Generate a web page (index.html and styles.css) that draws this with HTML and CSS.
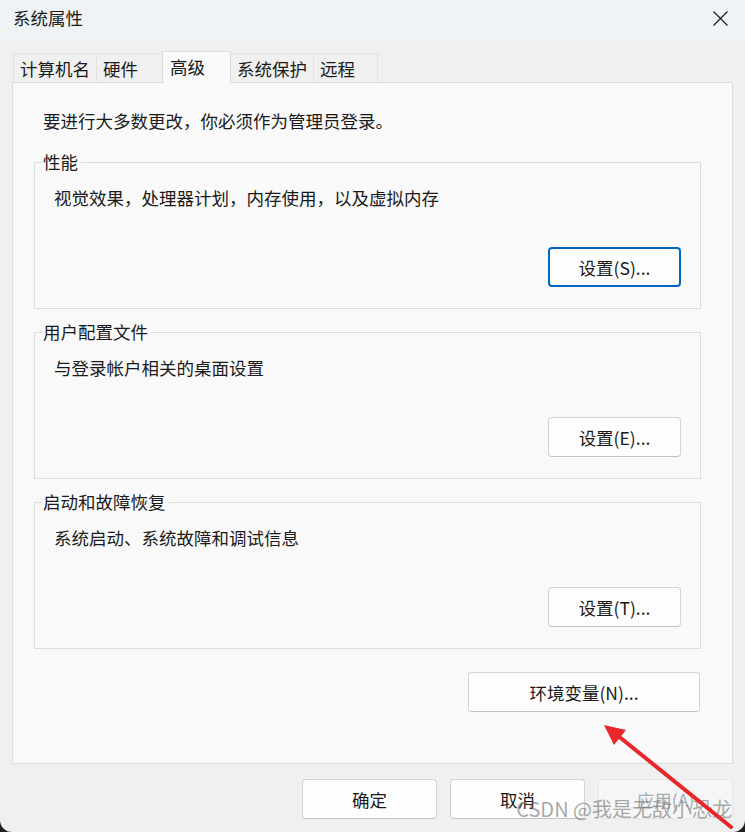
FILE: index.html
```html
<!DOCTYPE html>
<html lang="zh-CN">
<head>
    <meta charset="UTF-8">
    <meta name="viewport" content="width=device-width, initial-scale=1.0">
    <title>系统属性</title>
    <link rel="stylesheet" href="styles.css">
</head>
<body>
    <div class="window">
        <div class="titlebar">
            <span class="title">系统属性</span>
            <svg class="close" width="15" height="15" viewBox="0 0 15 15">
                <path d="M0.5 0.5 L14.5 14.5 M14.5 0.5 L0.5 14.5" stroke="#1a1a1a" stroke-width="1.2" fill="none"/>
            </svg>
        </div>

        <div class="content">
            <div class="tabs">
                <div class="tab">计算机名</div>
                <div class="tab">硬件</div>
                <div class="tab active">高级</div>
                <div class="tab">系统保护</div>
                <div class="tab short">远程</div>
            </div>

            <div class="panel">
                <p class="note">要进行大多数更改，你必须作为管理员登录。</p>

                <fieldset class="group">
                    <legend>性能</legend>
                    <p class="desc">视觉效果，处理器计划，内存使用，以及虚拟内存</p>
                    <div class="group-actions">
                        <button class="btn focused">设置(S)...</button>
                    </div>
                </fieldset>

                <fieldset class="group">
                    <legend>用户配置文件</legend>
                    <p class="desc">与登录帐户相关的桌面设置</p>
                    <div class="group-actions">
                        <button class="btn">设置(E)...</button>
                    </div>
                </fieldset>

                <fieldset class="group">
                    <legend>启动和故障恢复</legend>
                    <p class="desc">系统启动、系统故障和调试信息</p>
                    <div class="group-actions">
                        <button class="btn">设置(T)...</button>
                    </div>
                </fieldset>

                <button class="btn env">环境变量(N)...</button>
            </div>

            <div class="footer">
                <button class="btn">确定</button>
                <button class="btn">取消</button>
                <button class="btn disabled">应用(A)</button>
            </div>
        </div>

        <div class="watermark">CSDN @我是无敌小恐龙</div>

        <!-- annotation arrow -->
        <svg class="arrow" width="745" height="832" viewBox="0 0 745 832">
            <line x1="617" y1="735" x2="731" y2="827" stroke="#e8262b" stroke-width="4" stroke-linecap="round"/>
            <polygon points="604,725 626,730 614,745" fill="#e8262b"/>
        </svg>
    </div>
</body>
</html>
```

FILE: styles.css
```css
:root {
    --window: #f0f0f0;
    --titlebar: #eef4f6;
    --panel: #f9f9f9;
    --line: #dcdcdc;
    --text: #1a1a1a;
    --accent: #0067c0;
}

* {
    box-sizing: border-box;
    font-family: "Noto Sans CJK SC", "Noto Sans", sans-serif;
}

body {
    margin: 0;
    background: #1f1f1f;
}

.window {
    position: relative;
    width: 745px;
    height: 832px;
    background: var(--window);
    border-radius: 0 0 12px 12px;
    overflow: hidden;
    color: var(--text);
    font-size: 17.5px;
}

.titlebar {
    height: 38px;
    background: var(--titlebar);
    display: flex;
    align-items: center;
    justify-content: space-between;
    padding: 0 17px 3px 13px;
}

.title {
    line-height: 22px;
}

.close {
    display: block;
    margin-top: 2px;
}

.content {
    padding: 13px 12px 0 12px;
}

.tabs {
    display: flex;
    align-items: flex-end;
    padding-left: 1px;
    height: 31px;
    position: relative;
    z-index: 1;
}

.tab {
    height: 29px;
    min-width: 67px;
    padding: 0 6px;
    line-height: 29px;
    background: var(--window);
    border: 1px solid #e2e2e2;
    border-bottom: none;
    margin-right: -1px;
}

.tab.short {
    min-width: 65px;
}

.tab.active {
    height: 32px;
    min-width: 69px;
    margin-bottom: -1px;
    padding: 0 7px;
    line-height: 30px;
    background: var(--panel);
    border-color: var(--line);
    position: relative;
    z-index: 2;
}

.panel {
    height: 682px;
    background: var(--panel);
    border: 1px solid var(--line);
    padding: 27px 31px 0 21px;
    display: flex;
    flex-direction: column;
}

.note {
    margin: 0 0 19px 9px;
    line-height: 22px;
}

.group {
    margin: 0 0 12px 0;
    padding: 14px 19px 21px 19px;
    border: 1px solid var(--line);
    min-width: 0;
}

.group legend {
    margin-left: -12px;
    padding: 0 3px 0 1px;
    line-height: 22px;
}

.desc {
    margin: 0;
    line-height: 22px;
}

.group-actions {
    display: flex;
    justify-content: flex-end;
    margin-top: 38px;
}

.btn {
    height: 40px;
    width: 133px;
    background: #fdfdfd;
    border: 1px solid #d3d3d3;
    border-bottom-color: #c2c2c2;
    border-radius: 4px;
    color: var(--text);
    font-size: 17.5px;
    padding: 0;
}

.btn.focused {
    border: 2px solid var(--accent);
}

.btn.env {
    align-self: flex-end;
    width: 232px;
    height: 40px;
    margin-top: 11px;
    margin-right: 1px;
}

.footer {
    display: flex;
    justify-content: flex-end;
    gap: 13px;
    margin-top: 15px;
}

.footer .btn {
    width: 135px;
}

.btn.disabled {
    background: #f6f6f6;
    border-color: #e6e6e6;
    color: #a3acb7;
}

.watermark {
    position: absolute;
    right: 13px;
    top: 796px;
    font-size: 20px;
    line-height: 26px;
    color: rgba(110, 110, 110, 0.6);
    pointer-events: none;
}

.arrow {
    position: absolute;
    left: 0;
    top: 0;
    pointer-events: none;
}
```
